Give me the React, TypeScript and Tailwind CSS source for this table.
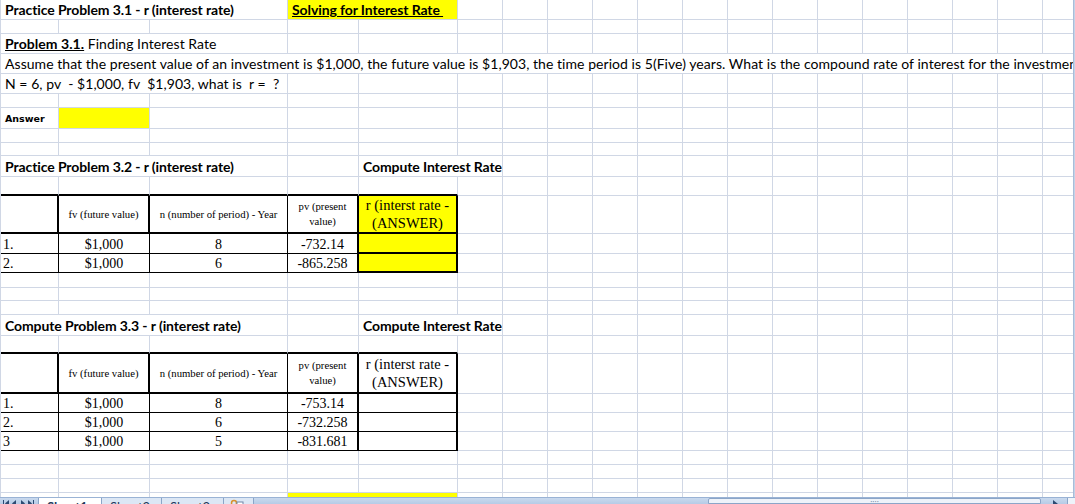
import type { ReactNode } from 'react'

type Edge = 'g' | 'k' | 'K'

type Cell = {
  c: number
  span?: number
  right?: Edge
  bottom?: Edge
  mid?: boolean
  cls?: string
  children?: ReactNode
}

const NCOLS = 19

const rightCls: Record<Edge, string> = {
  g: 'border-r border-r-[#d0d7e5]',
  k: 'border-r border-r-black',
  K: 'border-r-2 border-r-black',
}

const bottomCls: Record<Edge, string> = {
  g: 'border-b border-b-[#d0d7e5]',
  k: 'border-b border-b-black',
  K: 'border-b-2 border-b-black',
}

const spanCls: Record<number, string> = {
  1: '',
  2: 'col-span-2',
  3: 'col-span-3',
  19: 'col-span-19',
}

const sans = "font-['Lato',sans-serif] text-[14px] leading-[16px] text-black"
const serif = "font-['Liberation_Serif',serif] text-black"
const title = `${sans} font-bold tracking-[-0.1px] pl-[4px] pb-[1px]`
const body = `${sans} tracking-[0.05px] pl-[4px] pb-[1px] whitespace-pre`
const purple = 'text-[#4a3cf0]'

// header row of a problem table
function headerRow(answerBg: string): Cell[] {
  const h = `${serif} text-[10.7px] justify-center text-center`
  return [
    { c: 0, right: 'K', bottom: 'K' },
    { c: 1, right: 'K', bottom: 'K', mid: true, cls: `${h} leading-[14px]`, children: 'fv (future value)' },
    { c: 2, right: 'k', bottom: 'K', mid: true, cls: `${h} leading-[14px]`, children: 'n (number of period) - Year' },
    {
      c: 3,
      right: 'K',
      bottom: 'K',
      mid: true,
      cls: `${h} leading-[15px]`,
      children: (
        <span>
          pv (present
          <br />
          value)
        </span>
      ),
    },
    {
      c: 4,
      right: 'K',
      bottom: 'K',
      mid: true,
      cls: `${serif} ${answerBg} text-[14.5px] leading-[18px] justify-center text-center`,
      children: (
        <span>
          r (interst rate -
          <br />
          (ANSWER)
        </span>
      ),
    },
  ]
}

function dataRow(n: string, fv: string, yrs: string, pv: string, answer: Cell): Cell[] {
  const d = `${serif} text-[14px] leading-[16px] justify-center`
  return [
    { c: 0, right: 'k', bottom: 'k', cls: `${serif} text-[14px] leading-[16px] pl-[2px]`, children: n },
    { c: 1, right: 'k', bottom: 'k', cls: d, children: fv },
    { c: 2, right: 'k', bottom: 'k', cls: d, children: yrs },
    { c: 3, right: 'K', bottom: 'k', cls: d, children: pv },
    answer,
  ]
}

const thickUnder: Cell[] = [0, 1, 2, 3, 4].map((c) => ({ c, bottom: 'K' as Edge }))

const sheet: Record<number, Cell[]> = {
  0: [
    { c: 0, span: 3, cls: title, children: 'Practice Problem 3.1 - r (interest rate)' },
    {
      c: 3,
      span: 2,
      cls: `${title} bg-[#ffff00]`,
      children: <span className="underline whitespace-pre">Solving for Interest Rate </span>,
    },
  ],
  2: [
    {
      c: 0,
      span: 3,
      cls: body,
      children: (
        <span>
          <b className="underline">Problem 3.1.</b> Finding Interest Rate
        </span>
      ),
    },
  ],
  3: [
    {
      c: 0,
      span: 19,
      cls: body,
      children:
        'Assume that the present value of an investment is $1,000, the future value is $1,903, the time period is 5(Five) years. What is the compound rate of interest for the investment?',
    },
  ],
  4: [{ c: 0, span: 3, cls: body, children: 'N = 6, pv  - $1,000, fv  $1,903, what is  r =  ?' }],
  6: [
    {
      c: 0,
      cls: "font-['DejaVu_Sans',sans-serif] font-bold text-[9.5px] leading-[12px] text-black pl-[4px] pb-[3px]",
      children: 'Answer',
    },
    { c: 1, cls: 'bg-[#ffff00]' },
  ],
  9: [
    { c: 0, span: 3, cls: title, children: 'Practice Problem 3.2 - r (interest rate)' },
    { c: 4, span: 2, cls: title, children: 'Compute Interest Rate' },
  ],
  10: thickUnder,
  11: headerRow('bg-[#ffff00]'),
  12: dataRow('1.', '$1,000', '8', '-732.14', { c: 4, right: 'K', bottom: 'K', cls: 'bg-[#ffff00]' }),
  13: dataRow('2.', '$1,000', '6', '-865.258', { c: 4, right: 'K', bottom: 'K', cls: 'bg-[#ffff00]' }),
  17: [
    { c: 0, span: 3, cls: `${title} ${purple}`, children: 'Compute Problem 3.3 - r (interest rate)' },
    { c: 4, span: 2, cls: `${title} ${purple}`, children: 'Compute Interest Rate' },
  ],
  18: thickUnder,
  19: headerRow(''),
  20: dataRow('1.', '$1,000', '8', '-753.14', { c: 4, right: 'K', bottom: 'k' }),
  21: dataRow('2.', '$1,000', '6', '-732.258', { c: 4, right: 'K', bottom: 'k' }),
  22: dataRow('3', '$1,000', '5', '-831.681', { c: 4, right: 'K', bottom: 'k' }),
  26: [{ c: 3, span: 2, cls: 'bg-[#ffff00]' }],
}

const ROW_COUNT = 27

function Sheet() {
  const cells: ReactNode[] = []
  for (let r = 0; r < ROW_COUNT; r++) {
    const defs = sheet[r] ?? []
    let c = 0
    while (c < NCOLS) {
      const d = defs.find((x) => x.c === c)
      const span = d?.span ?? 1
      cells.push(
        <div
          key={`${r}-${c}`}
          className={`flex overflow-hidden whitespace-nowrap ${d?.mid ? 'items-center' : 'items-end'} ${spanCls[span]} ${rightCls[d?.right ?? 'g']} ${bottomCls[d?.bottom ?? 'g']} ${d?.cls ?? ''}`}
        >
          {d?.children}
        </div>,
      )
      c += span
    }
  }
  return (
    <div className="grid grid-cols-[58px_91px_138px_71px_99px_repeat(14,45px)] grid-rows-[20px_14px_20px_20px_20px_14px_21px_14px_13px_21px_19px_38px_20px_19px_15px_13px_14px_21px_18px_40px_19px_19px_19px_14px_14px_14px_20px] border-l border-l-[#d0d7e5] bg-white">
      {cells}
    </div>
  )
}

function NavArrows() {
  return (
    <svg width="38" height="10" viewBox="0 0 38 10" className="shrink-0">
      <g fill="#2c4a72">
        <rect x="3" y="2" width="1" height="7" />
        <path d="M9 2 L5 5.5 L9 9 Z" />
        <path d="M16 2 L12 5.5 L16 9 Z" />
        <path d="M21 2 L25 5.5 L21 9 Z" />
        <path d="M28 2 L32 5.5 L28 9 Z" />
        <rect x="33" y="2" width="1" height="7" />
      </g>
    </svg>
  )
}

function TabBar() {
  const tab = "h-[16px] px-[8px] pt-[2px] font-['Lato',sans-serif] text-[13px] leading-[14px] text-[#1e395b] overflow-hidden"
  return (
    <div className="h-[7px] overflow-hidden flex bg-gradient-to-b from-[#c9d9ee] to-[#b6cbe6] border-t border-t-[#9ab3d5]">
      <NavArrows />
      <div className={`${tab} bg-white font-bold border-x border-x-[#8ba5c8] w-[64px]`}>Sheet1</div>
      <div className={`${tab} bg-[#dce7f5] border-r border-r-[#8ba5c8] w-[60px]`}>Sheet2</div>
      <div className={`${tab} bg-[#dce7f5] border-r border-r-[#8ba5c8] w-[62px]`}>Sheet3</div>
      <div className="w-[30px] bg-[#dce7f5] border-r border-r-[#8ba5c8] pl-[6px] pt-[1px]">
        <svg width="14" height="10" viewBox="0 0 14 10">
          <circle cx="4" cy="4" r="2.5" fill="none" stroke="#d9902b" strokeWidth="1.5" />
          <rect x="7" y="3" width="6" height="7" fill="#fff" stroke="#6f86a8" />
        </svg>
      </div>
      <div className="flex-1" />
      <div className="w-[333px] mr-[8px] bg-[#eef3fa] border border-[#8ba5c8] rounded-t-[2px] flex justify-center">
        <span className="text-[8px] leading-[8px] text-[#6b7f9c]">::::</span>
      </div>
      <div className="w-[18px] pl-[4px] pt-[2px]">
        <svg width="6" height="8" viewBox="0 0 6 8">
          <path d="M0 0 L5 4 L0 8 Z" fill="#2c4a72" />
        </svg>
      </div>
      <div className="w-[8px] bg-[#eef3fa] border-l border-l-[#8ba5c8]" />
    </div>
  )
}

export default function App() {
  return (
    <div className="w-[1075px] h-[504px] overflow-hidden flex flex-col bg-white">
      <div className="h-[497px] flex overflow-hidden">
        <div className="w-[1073px] overflow-hidden">
          <Sheet />
        </div>
        <div className="w-[2px] bg-[#c3d3e8] border-l border-l-[#a9bcd8]" />
      </div>
      <TabBar />
    </div>
  )
}
